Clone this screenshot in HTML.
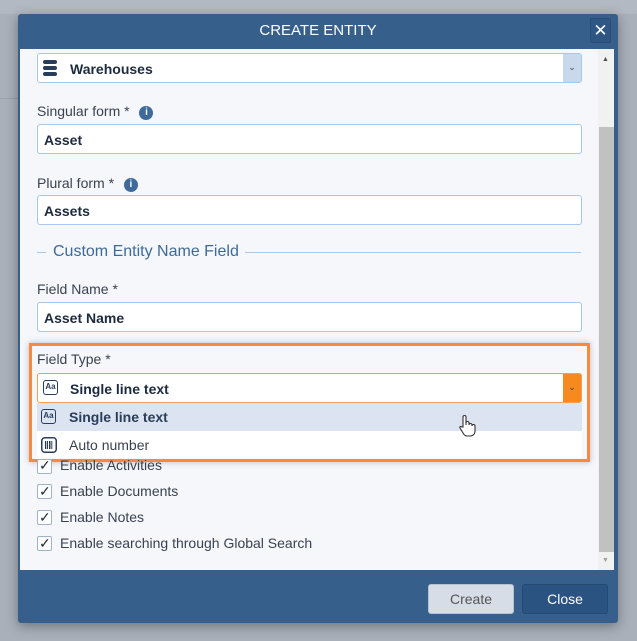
<!DOCTYPE html><html><head><style>
*{box-sizing:border-box;margin:0;padding:0}
body{width:637px;height:641px;background:#a9b0ba;font-family:"Liberation Sans",sans-serif;position:relative;overflow:hidden}
.a{position:absolute}
.lbl{font-size:14px;color:#3a4250;left:37px}
.inp{left:37px;width:545px;height:30px;background:#fff;border:1px solid #a9c7e8;border-radius:3px;font-weight:bold;font-size:14px;color:#1d2b3e;padding:7px 6px}
.info{display:inline-block;width:14px;height:14px;border-radius:50%;background:#3e6a9c;color:#fff;font-size:10px;font-weight:bold;text-align:center;line-height:14px;vertical-align:1px;margin-left:6px}
.cb{left:37px;width:15px;height:15px;border:1px solid #9fb3cc;background:#fff;border-radius:2px}
.cbl{left:60px;font-size:14px;color:#3a4250}
.aa{display:inline-block;width:15px;height:15px;border:1.5px solid #2a3d5a;border-radius:3px;font-size:8px;font-weight:bold;text-align:center;line-height:12px;color:#2a3d5a}
</style></head><body>
<div class="a" style="left:0;top:0;width:637px;height:14px;background:#b3b9c2"></div>
<div class="a" style="left:0;top:98px;width:18px;height:1px;background:#9aa1ab"></div>
<div class="a" style="left:18px;top:14px;width:600px;height:609px;background:#365f8b;border-radius:3px;box-shadow:0 3px 12px rgba(0,0,0,.35)"></div>
<div class="a" style="left:18px;top:14px;width:600px;height:34px;color:#fff;font-size:15px;text-align:center;line-height:34px">CREATE ENTITY</div>
<div class="a" style="left:590px;top:18px;width:21px;height:25px;border:1px solid #2a4c75;background:#2f5783;border-radius:2px;color:#fff;font-size:17px;text-align:center;line-height:23px">✕</div>
<div class="a" style="left:20px;top:49px;width:594px;height:521px;background:#f5f7fb"></div>
<div class="a inp" style="top:53px;padding-left:32px;border-color:#a9c7e8">Warehouses</div>
<svg class="a" style="left:42px;top:59px" width="16" height="18" viewBox="0 0 16 18"><g fill="#2a3d5a"><rect x="1" y="1" width="14" height="4" rx="2"/><rect x="1" y="7" width="14" height="4" rx="2"/><rect x="1" y="13" width="14" height="4" rx="2"/></g></svg>
<div class="a" style="left:563px;top:54px;width:18px;height:28px;background:#c9d9ec;color:#3a4a60;font-size:9px;text-align:center;line-height:26px">⌄</div>
<div class="a lbl" style="top:103px">Singular form * <span class="info">i</span></div>
<div class="a inp" style="top:124px">Asset</div>
<div class="a lbl" style="top:175px">Plural form * <span class="info">i</span></div>
<div class="a inp" style="top:195px">Assets</div>
<div class="a" style="left:37px;top:252px;width:9px;height:1px;background:#a9c7e8"></div>
<div class="a" style="left:53px;top:243px;font-size:16px;color:#3d6a9a">Custom Entity Name Field</div>
<div class="a" style="left:245px;top:252px;width:336px;height:1px;background:#a9c7e8"></div>
<div class="a lbl" style="top:281px">Field Name *</div>
<div class="a inp" style="top:302px">Asset Name</div>
<div class="a" style="left:29px;top:343px;width:561px;height:119px;border:3px solid #f68a42;box-shadow:0 0 6px rgba(0,0,0,.25)"></div>
<div class="a lbl" style="top:351px">Field Type *</div>
<div class="a inp" style="top:373px;border-color:#f0a050;padding-left:32px">Single line text</div>
<span class="a aa" style="left:43px;top:380px">Aa</span>
<div class="a" style="left:563px;top:374px;width:18px;height:28px;background:#f68a1e;color:#333;font-size:9px;text-align:center;line-height:26px">⌄</div>
<div class="a" style="left:37px;top:403px;width:545px;height:28px;background:#dbe4f0;font-size:14px;font-weight:bold;color:#2a3d5a;padding:6px 32px"><span>Single line text</span></div>
<span class="a aa" style="left:41px;top:409px">Aa</span>
<div class="a" style="left:37px;top:431px;width:545px;height:27px;background:#fff;font-size:14px;color:#3a4250;padding:6px 32px">Auto number</div>
<svg class="a" style="left:41px;top:437px" width="16" height="16" viewBox="0 0 16 16"><rect x=".75" y=".75" width="14.5" height="14.5" rx="3" fill="none" stroke="#2a3d5a" stroke-width="1.5"/><g fill="#2a3d5a"><rect x="4" y="4" width="1.3" height="8"/><rect x="6" y="4" width="1" height="8"/><rect x="8" y="4" width="1.5" height="8"/><rect x="10.3" y="4" width="1" height="8"/></g></svg>
<svg class="a" style="left:458px;top:414px" width="18" height="24" viewBox="0 0 18 24"><path d="M5 13V3a1.5 1.5 0 0 1 3 0v8V9a1.5 1.5 0 0 1 3 0v2a1.5 1.5 0 0 1 3 0v1a1.5 1.5 0 0 1 3 0v5c0 3-2 5-5 5H9c-2 0-3-1-4-3l-3-5c-.6-1 .6-2 1.5-1.2z" fill="#fff" stroke="#333" stroke-width="1.1"/></svg>
<div class="a cb" style="top:459px"></div><div class="a cbl" style="top:457px">Enable Activities</div>
<div class="a cb" style="top:484px"></div><div class="a cbl" style="top:483px">Enable Documents</div>
<div class="a cb" style="top:510px"></div><div class="a cbl" style="top:509px">Enable Notes</div>
<div class="a cb" style="top:536px"></div><div class="a cbl" style="top:535px">Enable searching through Global Search</div>
<div class="a" style="left:39px;top:457px;font-size:14px;color:#1d2b3e">✓</div>
<div class="a" style="left:39px;top:483px;font-size:14px;color:#1d2b3e">✓</div>
<div class="a" style="left:39px;top:509px;font-size:14px;color:#1d2b3e">✓</div>
<div class="a" style="left:39px;top:535px;font-size:14px;color:#1d2b3e">✓</div>
<div class="a" style="left:598px;top:49px;width:16px;height:521px;background:#f1f1f1"></div>
<div class="a" style="left:599px;top:127px;width:15px;height:425px;background:#c1c1c1"></div>
<div class="a" style="left:602px;top:56px;font-size:7px;color:#505050">▲</div>
<div class="a" style="left:602px;top:557px;font-size:7px;color:#a0a0a0">▼</div>
<div class="a" style="left:428px;top:584px;width:86px;height:30px;background:#d6dde6;border:1px solid #b8c2cf;border-radius:3px;color:#555;font-size:14px;text-align:center;line-height:28px">Create</div>
<div class="a" style="left:522px;top:584px;width:86px;height:30px;background:#2b5382;border:1px solid #244a74;border-radius:3px;color:#fff;font-size:14px;text-align:center;line-height:28px">Close</div>
</body></html>
